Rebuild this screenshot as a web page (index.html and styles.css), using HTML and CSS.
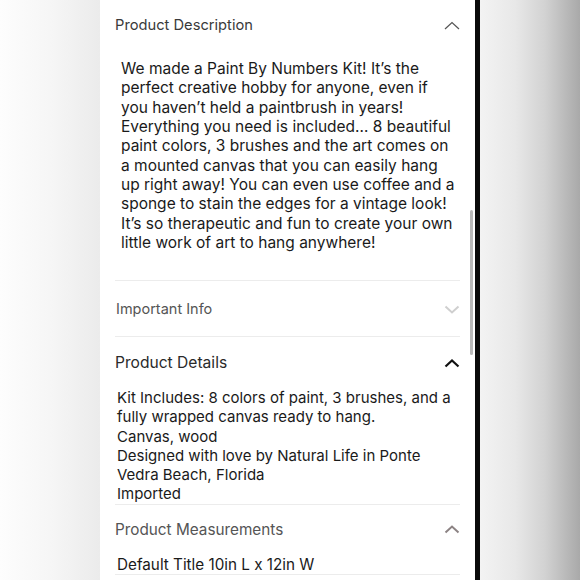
FILE: index.html
```html
<!DOCTYPE html>
<html>
<head>
<meta charset="utf-8">
<link rel="stylesheet" href="styles.css">
</head>
<body>
<div class="side-left"></div>
<main class="panel">
  <section class="acc acc-desc">
    <div class="acc-head head-desc">
      <span>Product Description</span>
      <svg class="chev" width="16" height="9" viewBox="0 0 16 9"><polyline points="1,8 8,1.5 15,8" fill="none" stroke="#555" stroke-width="1.2"/></svg>
    </div>
    <p class="acc-body body-desc">We made a Paint By Numbers Kit! It’s the<br>perfect creative hobby for anyone, even if<br>you haven’t held a paintbrush in years!<br>Everything you need is included… 8 beautiful<br>paint colors, 3 brushes and the art comes on<br>a mounted canvas that you can easily hang<br>up right away! You can even use coffee and a<br>sponge to stain the edges for a vintage look!<br>It’s so therapeutic and fun to create your own<br>little work of art to hang anywhere!</p>
  </section>
  <section class="acc acc-info">
    <div class="acc-head head-info">
      <span>Important Info</span>
      <svg class="chev" width="16" height="9" viewBox="0 0 16 9"><polyline points="1.5,1.5 8,7.5 14.5,1.5" fill="none" stroke="#cfcfcf" stroke-width="2"/></svg>
    </div>
  </section>
  <section class="acc acc-details">
    <div class="acc-head head-details">
      <span>Product Details</span>
      <svg class="chev" width="16" height="9" viewBox="0 0 16 9"><polyline points="1.5,7.5 8,1.5 14.5,7.5" fill="none" stroke="#111" stroke-width="2.2"/></svg>
    </div>
    <p class="acc-body body-details">Kit Includes: 8 colors of paint, 3 brushes, and a<br>fully wrapped canvas ready to hang.<br>Canvas, wood<br>Designed with love by Natural Life in Ponte<br>Vedra Beach, Florida<br>Imported</p>
  </section>
  <section class="acc acc-meas">
    <div class="acc-head head-meas">
      <span>Product Measurements</span>
      <svg class="chev" width="16" height="9" viewBox="0 0 16 9"><polyline points="1.5,7.5 8,1.5 14.5,7.5" fill="none" stroke="#8c8384" stroke-width="2"/></svg>
    </div>
    <p class="acc-body body-meas">Default Title 10in L x 12in W</p>
  </section>
  <div class="scrollbar"></div>
</main>
<div class="edge"></div>
<div class="side-right"></div>
</body>
</html>
```

FILE: styles.css
```css
html, body {
  margin: 0;
  padding: 0;
  height: 580px;
  overflow: hidden;
}
body {
  display: flex;
  width: 580px;
  font-family: Inter, "Liberation Sans", sans-serif;
  color: #222;
}
.side-left {
  width: 100px;
  flex: none;
  background: linear-gradient(to right, #fdfdfd 0%, #f6f6f6 50%, #ebebeb 100%);
}
.panel {
  position: relative;
  width: 345px;
  flex: none;
  padding: 0 15px;
  background: #fff;
}
.edge {
  width: 5px;
  flex: none;
  background: #0a0a0a;
}
.side-right {
  flex: 1;
  background: linear-gradient(to right, #f3f3f3 0%, #e8e8e8 35%, #d2d2d2 65%, #a9a9a9 100%);
}
.acc {
  border-bottom: 1px solid #ececec;
}
.acc-head {
  display: flex;
  justify-content: space-between;
  align-items: center;
  line-height: 20px;
  font-size: 15px;
}
.chev {
  display: block;
  flex: none;
}
.acc-body {
  margin: 0;
  font-size: 15px;
  color: #1a1a1a;
}
.head-desc {
  padding-top: 15px;
  font-size: 14.7px;
  color: #3a3a3a;
}
.body-desc {
  margin-top: 24px;
  padding: 0 0 28px 6px;
  font-size: 15.5px;
  line-height: 19.33px;
}
.head-info {
  padding: 18px 0 17px 1px;
  font-size: 14.5px;
  color: #555;
}
.head-details {
  padding-top: 16px;
  font-size: 15.6px;
  color: #2a2a2a;
}
.body-details {
  margin-top: 15px;
  padding-left: 2px;
  line-height: 19.2px;
}
.head-meas {
  padding-top: 15px;
  font-size: 15.3px;
  color: #555;
}
.body-meas {
  margin-top: 15px;
  padding-left: 2px;
  font-size: 15.25px;
  line-height: 19.2px;
}
.scrollbar {
  position: absolute;
  left: 370px;
  top: 210px;
  width: 3px;
  height: 145px;
  border-radius: 2px;
  background: #b9b9b9;
}
```
